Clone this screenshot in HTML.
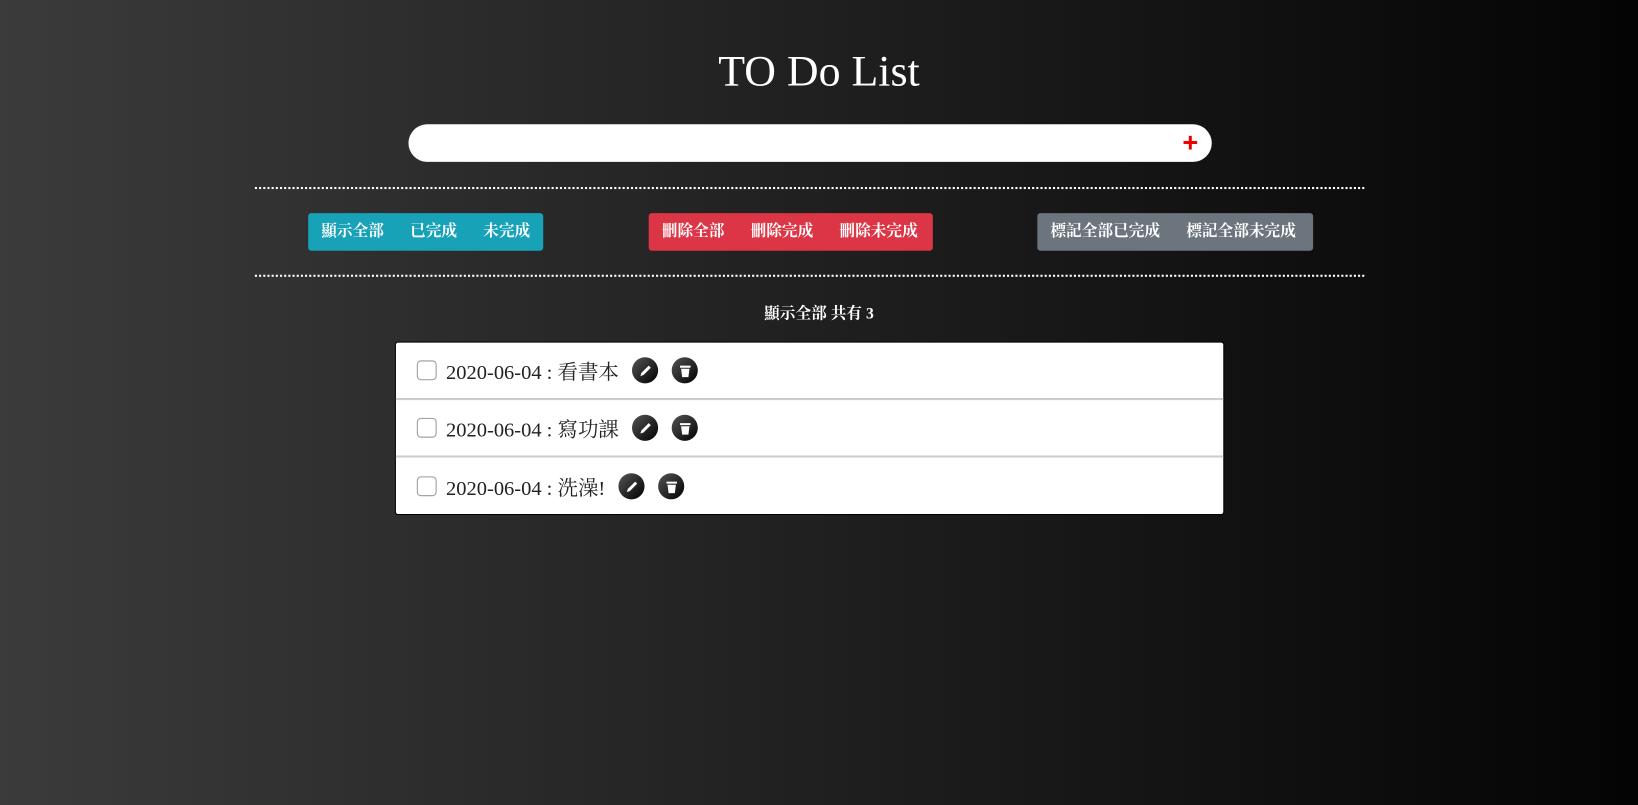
<!DOCTYPE html>
<html><head><meta charset="utf-8"><style>
*{box-sizing:border-box;margin:0;padding:0}
body{width:1638px;height:805px;overflow:hidden;background:linear-gradient(to right,#3b3b3b,#040404);font-family:"Liberation Serif","Noto Serif CJK SC",serif;color:#fff}
#w{position:relative;width:1568px;height:771px;transform:scale(1.04464);transform-origin:0 0}
h1{position:absolute;top:43px;left:0;width:100%;text-align:center;font-weight:normal;font-size:42px;line-height:52px}
.inp{position:absolute;left:391px;top:119px;width:769px;height:36px;background:#fff;border-radius:18px}
.inp span{position:absolute;right:13px;top:2px;color:#e00;font-size:26px;font-weight:bold;font-family:"Liberation Sans",sans-serif;line-height:30px}
.dash{position:absolute;left:244px;width:1062px;border-top:2px dotted #fff}
.grp{position:absolute;top:204px;height:36px;border-radius:3px;display:flex;font-size:15px;line-height:36px;font-weight:bold}
.grp div{padding:0 12.5px}
.sum{position:absolute;top:291px;left:0;width:100%;text-align:center;font-size:15px;font-weight:bold;line-height:20px}
.list{position:absolute;left:378px;top:327px;width:794px;height:166px;background:#fff;border:1px solid #000;border-radius:3px;color:#222}
.row{height:55px;border-bottom:2px solid #ccc;display:flex;align-items:center;padding-left:20px;font-size:19.6px}
.row:last-child{border-bottom:none}
.cb{width:19px;height:19px;border:1px solid #999;border-radius:4px;margin-right:9px}
.ic{width:25px;height:25px;border-radius:50%;background:linear-gradient(135deg,#555,#000);margin-left:13px;display:flex;align-items:center;justify-content:center}
</style></head><body><div id="w">
<h1>TO Do List</h1>
<div class="inp"><span>+</span></div>
<div class="dash" style="top:179px"></div>
<div class="grp" style="left:295px;width:225px;background:#17a2b8"><div>顯示全部</div><div>已完成</div><div>未完成</div></div>
<div class="grp" style="left:621px;width:272px;background:#dc3545"><div>刪除全部</div><div>刪除完成</div><div>刪除未完成</div></div>
<div class="grp" style="left:993px;width:264px;background:#6c757d"><div>標記全部已完成</div><div>標記全部未完成</div></div>
<div class="dash" style="top:263px"></div>
<div class="sum">顯示全部 共有 3</div>
<div class="list">
<div class="row"><div class="cb"></div>2020-06-04 : 看書本<div class="ic"><svg width="14" height="14" viewBox="0 0 14 14"><path d="M2 12l1-3 7-7 2 2-7 7z" fill="#fff"/></svg></div><div class="ic"><svg width="12" height="14" viewBox="0 0 12 14"><path d="M1 2h10v2H1zM2 5h8l-1 8H3z" fill="#fff"/></svg></div></div>
<div class="row"><div class="cb"></div>2020-06-04 : 寫功課<div class="ic"><svg width="14" height="14" viewBox="0 0 14 14"><path d="M2 12l1-3 7-7 2 2-7 7z" fill="#fff"/></svg></div><div class="ic"><svg width="12" height="14" viewBox="0 0 12 14"><path d="M1 2h10v2H1zM2 5h8l-1 8H3z" fill="#fff"/></svg></div></div>
<div class="row"><div class="cb"></div>2020-06-04 : 洗澡!<div class="ic"><svg width="14" height="14" viewBox="0 0 14 14"><path d="M2 12l1-3 7-7 2 2-7 7z" fill="#fff"/></svg></div><div class="ic"><svg width="12" height="14" viewBox="0 0 12 14"><path d="M1 2h10v2H1zM2 5h8l-1 8H3z" fill="#fff"/></svg></div></div>
</div>
</div></body></html>
